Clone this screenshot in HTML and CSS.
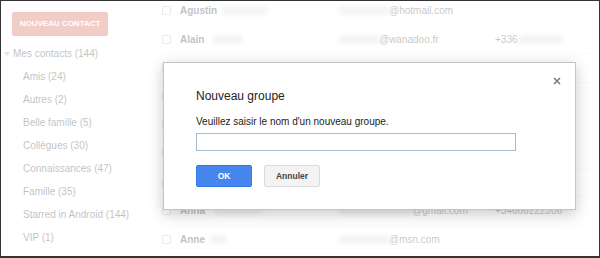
FILE: index.html
```html
<!DOCTYPE html>
<html lang="fr">
<head>
<meta charset="utf-8">
<title>Contacts - Nouveau groupe</title>
<link rel="stylesheet" href="styles.css">
</head>
<body>
<div class="frame">
  <aside class="sidebar">
    <div class="new-btn">NOUVEAU CONTACT</div>
    <ul class="nav">
      <li class="nav-head"><svg class="caret" width="6" height="4" viewBox="0 0 6 4"><path d="M0 0H6L3 4Z" fill="#999"/></svg>Mes contacts (144)</li>
      <li class="nav-item">Amis (24)</li>
      <li class="nav-item">Autres (2)</li>
      <li class="nav-item">Belle famille (5)</li>
      <li class="nav-item">Collègues (30)</li>
      <li class="nav-item">Connaissances (47)</li>
      <li class="nav-item">Famille (35)</li>
      <li class="nav-item">Starred in Android (144)</li>
      <li class="nav-item">VIP (1)</li>
    </ul>
  </aside>
  <main class="list">
    <div class="row">
      <span class="cb"></span>
      <span class="name">Agustin<i class="blur b-agustin"></i></span>
      <span class="email"><i class="blur b-em1"></i>@hotmail.com</span>
      <span class="phone"></span>
    </div>
    <div class="row">
      <span class="cb"></span>
      <span class="name">Alain<i class="blur b-alain"></i></span>
      <span class="email"><i class="blur b-em2"></i>@wanadoo.fr</span>
      <span class="phone">+336<i class="blur b-ph"></i></span>
    </div>
    <div class="row"><span class="cb"></span><span class="name"></span><span class="email"></span><span class="phone"></span></div>
    <div class="row"><span class="cb"></span><span class="name"></span><span class="email"></span><span class="phone"></span></div>
    <div class="row"><span class="cb"></span><span class="name"></span><span class="email"></span><span class="phone"></span></div>
    <div class="row"><span class="cb"></span><span class="name"></span><span class="email"></span><span class="phone"></span></div>
    <div class="row"><span class="cb"></span><span class="name"></span><span class="email"></span><span class="phone"></span></div>
    <div class="row">
      <span class="cb"></span>
      <span class="name">Anna<i class="blur b-anna"></i></span>
      <span class="email"><i class="blur b-em3"></i>@gmail.com</span>
      <span class="phone">+34666222306</span>
    </div>
    <div class="row">
      <span class="cb"></span>
      <span class="name">Anne<i class="blur b-anne"></i></span>
      <span class="email"><i class="blur b-em4"></i>@msn.com</span>
      <span class="phone"></span>
    </div>
  </main>
  <div class="overlay"></div>
  <div class="dialog">
    <svg class="close" width="8" height="8" viewBox="0 0 8 8"><path d="M1 1L7 7M7 1L1 7" stroke="#7a7a7a" stroke-width="1.6"/></svg>
    <h1 class="d-title">Nouveau groupe</h1>
    <p class="d-text">Veuillez saisir le nom d'un nouveau groupe.</p>
    <div class="d-input"></div>
    <div class="d-actions">
      <div class="btn btn-ok">OK</div>
      <div class="btn btn-cancel">Annuler</div>
    </div>
  </div>
</div>
</body>
</html>
```
FILE: styles.css
```css
html, body {
  margin: 0;
  padding: 0;
  background: #fff;
}
.frame {
  position: relative;
  width: 600px;
  height: 258px;
  box-sizing: border-box;
  border: 1px solid #333;
  border-bottom-width: 2px;
  overflow: hidden;
  display: flex;
  font-family: "Liberation Sans", Arial, sans-serif;
  font-size: 10px;
  color: #222;
  background: #fff;
}
.sidebar {
  width: 150px;
  flex: none;
  padding: 11px 0 0 3px;
  box-sizing: border-box;
}
.new-btn {
  margin-left: 8px;
  width: 96px;
  height: 24px;
  line-height: 24px;
  background: #d14836;
  color: #fff;
  font-weight: bold;
  font-size: 8px;
  text-align: center;
  border-radius: 2px;
}
.nav {
  list-style: none;
  margin: 6px 0 0;
  padding: 0;
}
.nav li {
  height: 23px;
  line-height: 23px;
  white-space: nowrap;
}
.nav-head {
  display: flex;
  align-items: center;
}
.caret {
  margin: 0 3px 0 0;
}
.nav-item {
  padding-left: 19px;
}
.list {
  flex: 1;
  padding-left: 11px;
  margin-top: -4px;
}
.row {
  display: grid;
  grid-template-columns: 18px 159px 156px 1fr;
  align-items: center;
  height: 28.6px;
  box-sizing: border-box;
  border-bottom: 1px solid #f0f0f0;
  white-space: nowrap;
}
.cb {
  width: 9px;
  height: 9px;
  box-sizing: border-box;
  border: 1px solid #b5b5b5;
  border-radius: 1px;
}
.name {
  font-weight: bold;
  display: flex;
  align-items: center;
}
.email, .phone {
  display: flex;
  align-items: center;
  color: #333;
}
.blur {
  display: inline-block;
  height: 9px;
  background: #d6d6d6;
  filter: blur(2px);
}
.b-agustin { width: 45px; margin-left: 5px; }
.b-alain { width: 29px; margin-left: 9px; }
.b-anna { width: 47px; margin-left: 10px; }
.b-anne { width: 16px; margin-left: 5px; }
.b-em1 { width: 50px; }
.b-em2 { width: 40px; }
.b-em3 { width: 73px; }
.b-em4 { width: 50px; }
.b-ph { width: 44px; margin-left: 1px; }
.overlay {
  position: absolute;
  inset: 0;
  background: rgba(255, 255, 255, 0.72);
}
.dialog {
  position: absolute;
  left: 162px;
  top: 61px;
  width: 413px;
  height: 148px;
  box-sizing: border-box;
  background: #fff;
  border: 1px solid #c4c4c4;
  box-shadow: 0 4px 14px rgba(0, 0, 0, 0.22);
  padding: 25px 32px 0;
}
.close {
  position: absolute;
  right: 14px;
  top: 14px;
}
.d-title {
  margin: 0;
  font-size: 12px;
  line-height: 16px;
  font-weight: normal;
  color: #222;
}
.d-text {
  margin: 11px 0 0;
  font-size: 10px;
  line-height: 14px;
  color: #222;
}
.d-input {
  margin-top: 4px;
  width: 320px;
  height: 18px;
  box-sizing: border-box;
  border: 1px solid #a8bbd4;
}
.d-actions {
  display: flex;
  gap: 12px;
  margin-top: 14px;
}
.btn {
  width: 56px;
  height: 22px;
  line-height: 20px;
  box-sizing: border-box;
  border-radius: 2px;
  font-weight: bold;
  font-size: 8.5px;
  text-align: center;
}
.btn-ok {
  background: #4787ed;
  border: 1px solid #3079ed;
  color: #fff;
}
.btn-cancel {
  background: #f3f3f3;
  border: 1px solid #dcdcdc;
  color: #444;
}
```
